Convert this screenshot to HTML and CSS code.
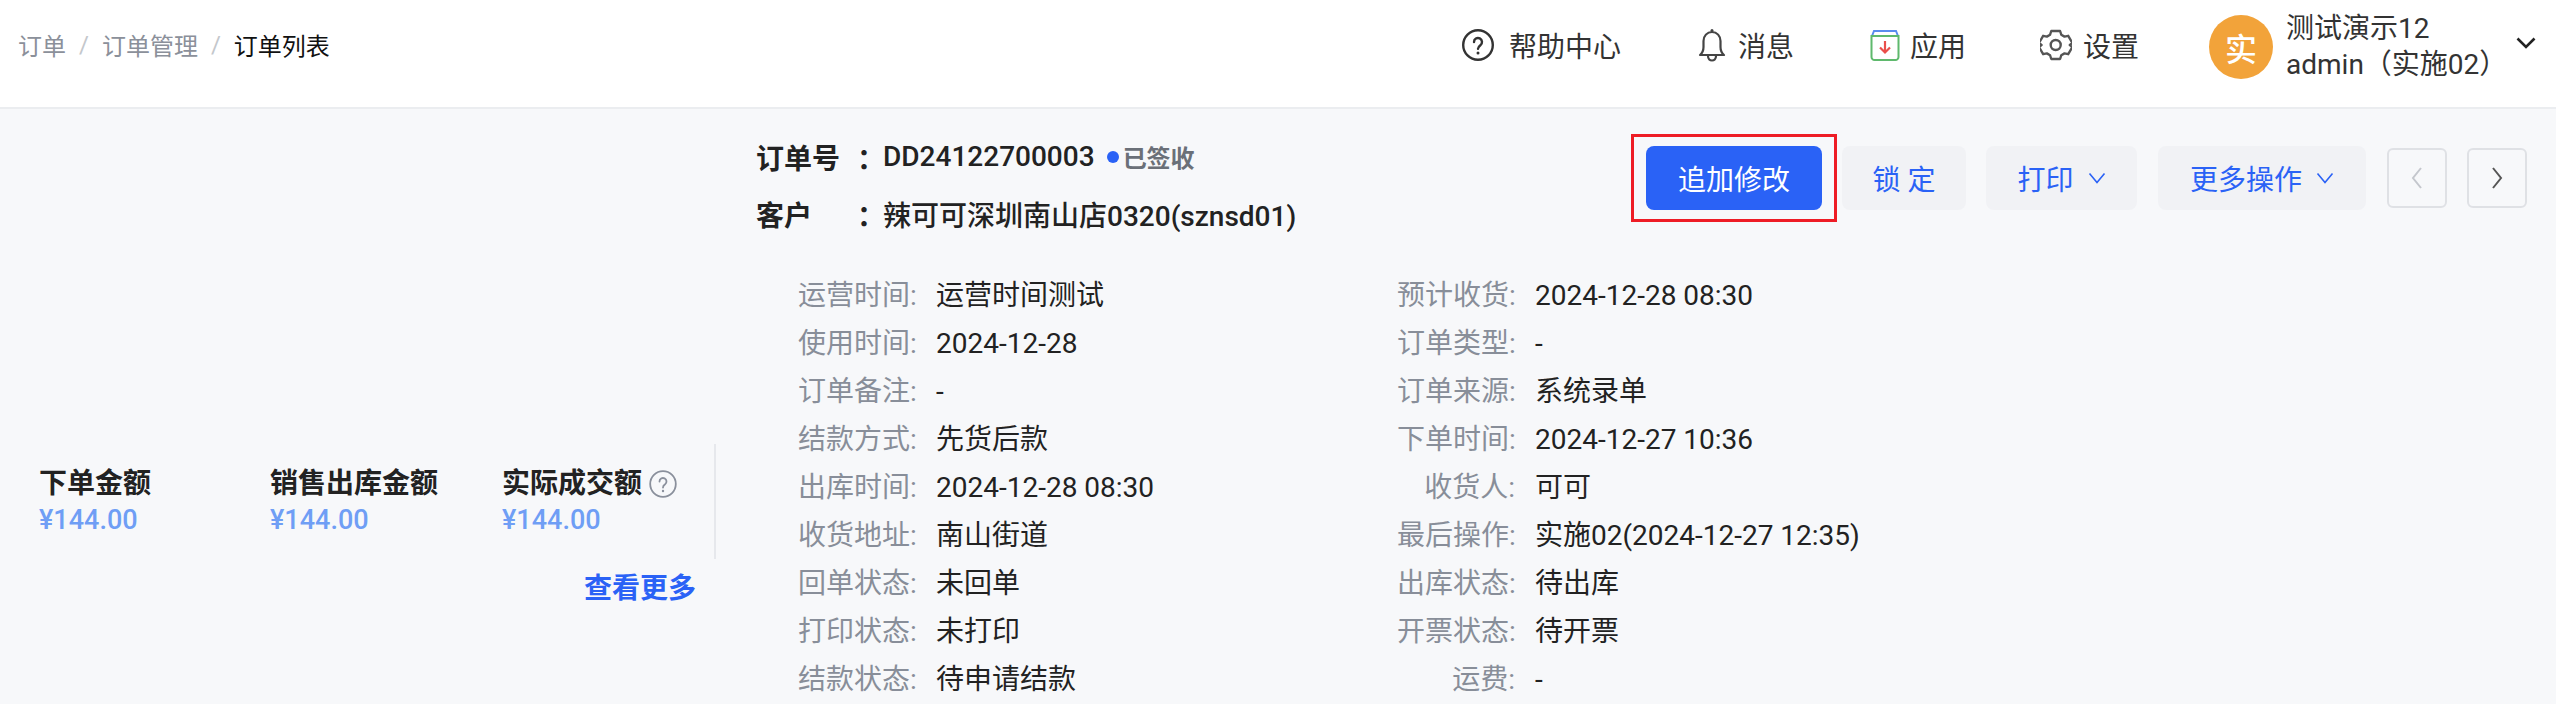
FILE: index.html
```html
<!DOCTYPE html>
<html lang="zh-CN">
<head>
<meta charset="utf-8">
<title>订单列表</title>
<link rel="stylesheet" href="styles.css">
</head>
<body>
<header class="topbar">
  <nav class="crumbs">
    <span class="crumb">订单</span><span class="sep">/</span>
    <span class="crumb">订单管理</span><span class="sep">/</span>
    <span class="crumb current">订单列表</span>
  </nav>
  <div class="tools">
    <div class="tool tool-help">
      <svg class="ico" width="32" height="32" viewBox="0 0 32 32" fill="none" stroke="#333" stroke-width="2.400"><circle cx="16" cy="16" r="14.800"/><path d="M12 13a4 4 0 1 1 6.400 3.200c-1.600 1.200-2.400 2-2.400 3.600" stroke-linecap="round"/><circle cx="16" cy="24" r="1.500" fill="#333" stroke="none"/></svg>
      <span>帮助中心</span>
    </div>
    <div class="tool tool-bell">
      <svg class="ico" width="28" height="34" viewBox="0 0 28 34" fill="none" stroke="#444" stroke-width="2.200" stroke-linejoin="round"><path d="M2 27c2.500-2 3.500-4 3.500-8v-6C5.500 8 9 4 14 4s8.500 4 8.500 9v6c0 4 1 6 3.500 8z"/><path d="M10 28c0 6 8 6 8 0"/><circle cx="14" cy="2.500" r="1.500" fill="#444" stroke="none"/></svg>
      <span>消息</span>
    </div>
    <div class="tool tool-app">
      <svg class="ico" width="30" height="32" viewBox="0 0 30 32" fill="none" stroke-width="2"><path d="M2 7l2-5h22l2 5" stroke="#5b8def"/><path d="M1.500 7h27v21a3 3 0 0 1-3 3h-21a3 3 0 0 1-3-3z" stroke="#5fb96d"/><path d="M15 12v11M10 18.500l5 5 5-5" stroke="#ea4f4a" stroke-width="2.200"/></svg>
      <span>应用</span>
    </div>
    <div class="tool tool-gear">
      <svg class="ico" width="32" height="32" viewBox="0 0 32 32" fill="none" stroke="#555" stroke-width="2.400" stroke-linejoin="round"><path d="M11.500 2h9l1.200 3.700 3.300 1.900 3.800-.8 4.200 7.200-2.600 2 2.600 2-4.200 7.200-3.800-.8-3.300 1.900-1.200 3.700h-9l-1.200-3.700-3.300-1.900-3.800.8-4.200-7.200 2.600-2-2.600-2 4.200-7.200 3.800.8 3.300-1.900z" transform="scale(.98 1)"/><circle cx="15.700" cy="16" r="5"/></svg>
      <span>设置</span>
    </div>
    <div class="user">
      <div class="avatar">实</div>
      <div class="user-text">
        <div>测试演示12</div>
        <div>admin（实施02）</div>
      </div>
      <svg class="user-caret" width="20" height="12" viewBox="0 0 20 12" fill="none" stroke="#222" stroke-width="2.600"><path d="M1.500 1.500L10 10l8.500-8.500"/></svg>
    </div>
  </div>
</header>

<main class="page">
  <aside class="summary">
    <div class="stats">
      <div class="stat stat-a">
        <div class="stat-title">下单金额</div>
        <div class="stat-value">¥144.00</div>
      </div>
      <div class="stat stat-b">
        <div class="stat-title">销售出库金额</div>
        <div class="stat-value">¥144.00</div>
      </div>
      <div class="stat">
        <div class="stat-title">实际成交额
          <svg class="stat-help" width="28" height="28" viewBox="0 0 28 28" fill="none" stroke="#8a909c" stroke-width="1.800"><circle cx="14" cy="14" r="12.800"/><path d="M10.500 11.500a3.500 3.500 0 1 1 5.600 2.800c-1.400 1-2.100 1.700-2.100 3.200" stroke-linecap="round"/><circle cx="14" cy="21" r="1.200" fill="#8a909c" stroke="none"/></svg>
        </div>
        <div class="stat-value">¥144.00</div>
      </div>
    </div>
    <a class="more">查看更多</a>
  </aside>

  <section class="detail">
    <div class="detail-head">
      <div class="order-info">
        <div class="info-row">
          <span class="info-key">订单号</span><span class="info-colon">：</span><span class="info-val">DD24122700003</span>
          <span class="status"><i class="dot"></i>已签收</span>
        </div>
        <div class="info-row">
          <span class="info-key">客户</span><span class="info-colon">：</span><span class="info-val">辣可可深圳南山店0320(sznsd01)</span>
        </div>
      </div>
      <div class="actions">
        <div class="mark"><button class="btn primary">追加修改</button></div>
        <button class="btn soft lock">锁 定</button>
        <button class="btn soft print">打印<svg class="caret" width="18" height="12" viewBox="0 0 18 12" fill="none" stroke="#2a62f6" stroke-width="1.600"><path d="M1.500 1.500L9 10.500l7.500-9"/></svg></button>
        <button class="btn soft more-op">更多操作<svg class="caret" width="18" height="12" viewBox="0 0 18 12" fill="none" stroke="#2a62f6" stroke-width="1.600"><path d="M1.500 1.500L9 10.500l7.500-9"/></svg></button>
        <button class="page-btn disabled"><svg width="12" height="24" viewBox="0 0 12 24" fill="none" stroke="#c4c7cd" stroke-width="2"><path d="M10 2L2 12l8 10"/></svg></button>
        <button class="page-btn"><svg width="12" height="24" viewBox="0 0 12 24" fill="none" stroke="#555" stroke-width="2"><path d="M2 2l8 10-8 10"/></svg></button>
      </div>
    </div>

    <div class="fields">
      <div class="field"><span class="key">运营时间:</span><span class="val">运营时间测试</span></div>
      <div class="field"><span class="key">预计收货:</span><span class="val">2024-12-28 08:30</span></div>
      <div class="field"><span class="key">使用时间:</span><span class="val">2024-12-28</span></div>
      <div class="field"><span class="key">订单类型:</span><span class="val">-</span></div>
      <div class="field"><span class="key">订单备注:</span><span class="val">-</span></div>
      <div class="field"><span class="key">订单来源:</span><span class="val">系统录单</span></div>
      <div class="field"><span class="key">结款方式:</span><span class="val">先货后款</span></div>
      <div class="field"><span class="key">下单时间:</span><span class="val">2024-12-27 10:36</span></div>
      <div class="field"><span class="key">出库时间:</span><span class="val">2024-12-28 08:30</span></div>
      <div class="field"><span class="key">收货人:</span><span class="val">可可</span></div>
      <div class="field"><span class="key">收货地址:</span><span class="val">南山街道</span></div>
      <div class="field"><span class="key">最后操作:</span><span class="val">实施02(2024-12-27 12:35)</span></div>
      <div class="field"><span class="key">回单状态:</span><span class="val">未回单</span></div>
      <div class="field"><span class="key">出库状态:</span><span class="val">待出库</span></div>
      <div class="field"><span class="key">打印状态:</span><span class="val">未打印</span></div>
      <div class="field"><span class="key">开票状态:</span><span class="val">待开票</span></div>
      <div class="field"><span class="key">结款状态:</span><span class="val">待申请结款</span></div>
      <div class="field"><span class="key">运费:</span><span class="val">-</span></div>
    </div>
  </section>
</main>
</body>
</html>
```
FILE: styles.css
```css
* { box-sizing: border-box; }
html, body { margin: 0; height: 100%; overflow: hidden; }
body {
  background: #f7f8fa;
  color: #222;
  font-family: Roboto, "Noto Sans CJK SC", sans-serif;
  font-size: 28px;
}

.topbar {
  height: 109px;
  background: #fff;
  border-bottom: 2px solid #ebedf0;
  display: flex;
  align-items: center;
  padding: 0 20px 15px 18px;
  justify-content: space-between;
}
.crumbs { display: flex; align-items: center; font-size: 24px; color: #8b909a; margin-top: -3px; }
.sep { color: #c4c7cc; margin: 0 13px; }
.current { color: #111; }

.tools { display: flex; align-items: center; padding-top: 2px; }
.tool { display: flex; align-items: center; color: #333; margin-top: -4px; }
.ico { display: block; flex: none; }
.tool-help { gap: 15px; margin-left: -3px; margin-right: 77px; }
.tool-bell { gap: 12px; margin-right: 76px; }
.tool-app { gap: 10px; margin-right: 74px; }
.tool-gear { gap: 11px; margin-right: 70px; }

.user { display: flex; align-items: center; }
.avatar {
  width: 64px; height: 64px; border-radius: 50%;
  background: #f2a33a; color: #fff;
  display: flex; align-items: center; justify-content: center;
  font-size: 32px; font-weight: 500; margin-right: 13px;
}
.user-text { width: 229px; line-height: 36px; color: #333; white-space: nowrap; }
.user-caret { margin-left: 1px; margin-top: -8px; }

.page { display: flex; }
.summary { width: 756px; padding: 335px 0 0 39px; flex: none; position: relative; }
.stats {
  display: flex;
  width: 677px;
  height: 115px;
  border-right: 2px solid #e6e8ec;
  padding-top: 22px;
}
.stat-a { width: 231px; }
.stat-b { width: 232px; }
.stat-title { font-weight: 700; line-height: 36px; color: #222; display: flex; align-items: center; gap: 7px; }
.stat-value { color: #6f9ef5; font-size: 27px; line-height: 36px; font-weight: 500; }
.stat-help { display: block; }
.more {
  display: block;
  width: 657px;
  text-align: right;
  margin-top: 12px;
  color: #2a62f6;
  font-weight: 700;
  line-height: 36px;
}

.detail { flex: 1; min-width: 0; }
.detail-head { display: flex; justify-content: space-between; padding: 19px 29px 0 0; }
.info-row { display: flex; align-items: center; height: 57px; font-weight: 700; color: #222; }
.info-val { font-weight: 500; }
.info-key { width: 101px; }
.info-colon { width: 26px; font-weight: 700; }
.status { display: flex; align-items: center; font-size: 24px; font-weight: 700; color: #6b7078; margin-left: 12px; }
.dot { width: 12px; height: 12px; border-radius: 50%; background: #2a62f6; margin-right: 4px; }

.actions { display: flex; align-items: center; align-self: flex-start; margin-top: 6px; }
.mark {
  border: 3px solid #ee1c25;
  padding: 9px 12px;
  margin-right: 5px;
  display: flex;
}
.btn {
  height: 64px;
  border: 0;
  border-radius: 8px;
  font: inherit;
  display: flex;
  align-items: center;
  justify-content: center;
  padding: 0;
}
.primary { width: 176px; background: #2a62f6; color: #fff; }
.soft { background: #f1f2f5; color: #2a62f6; }
.lock { width: 124px; margin-right: 20px; }
.print { width: 151px; margin-right: 21px; }
.more-op { width: 208px; margin-right: 21px; }
.caret { margin-left: 14px; }
.page-btn {
  width: 60px; height: 60px;
  background: transparent;
  border: 2px solid #dfe1e5;
  border-radius: 6px;
  display: flex; align-items: center; justify-content: center;
  padding: 0;
  margin-right: 20px;
}
.page-btn:last-child { margin-right: 0; }

.fields {
  display: grid;
  grid-template-columns: 599px 600px;
  grid-auto-rows: 48px;
  margin: 30px 0 0 42px;
}
.field { display: flex; align-items: center; line-height: 48px; }
.key { width: 118px; text-align: right; color: #888e99; white-space: nowrap; }
.val { margin-left: 20px; color: #222; white-space: nowrap; }
```
